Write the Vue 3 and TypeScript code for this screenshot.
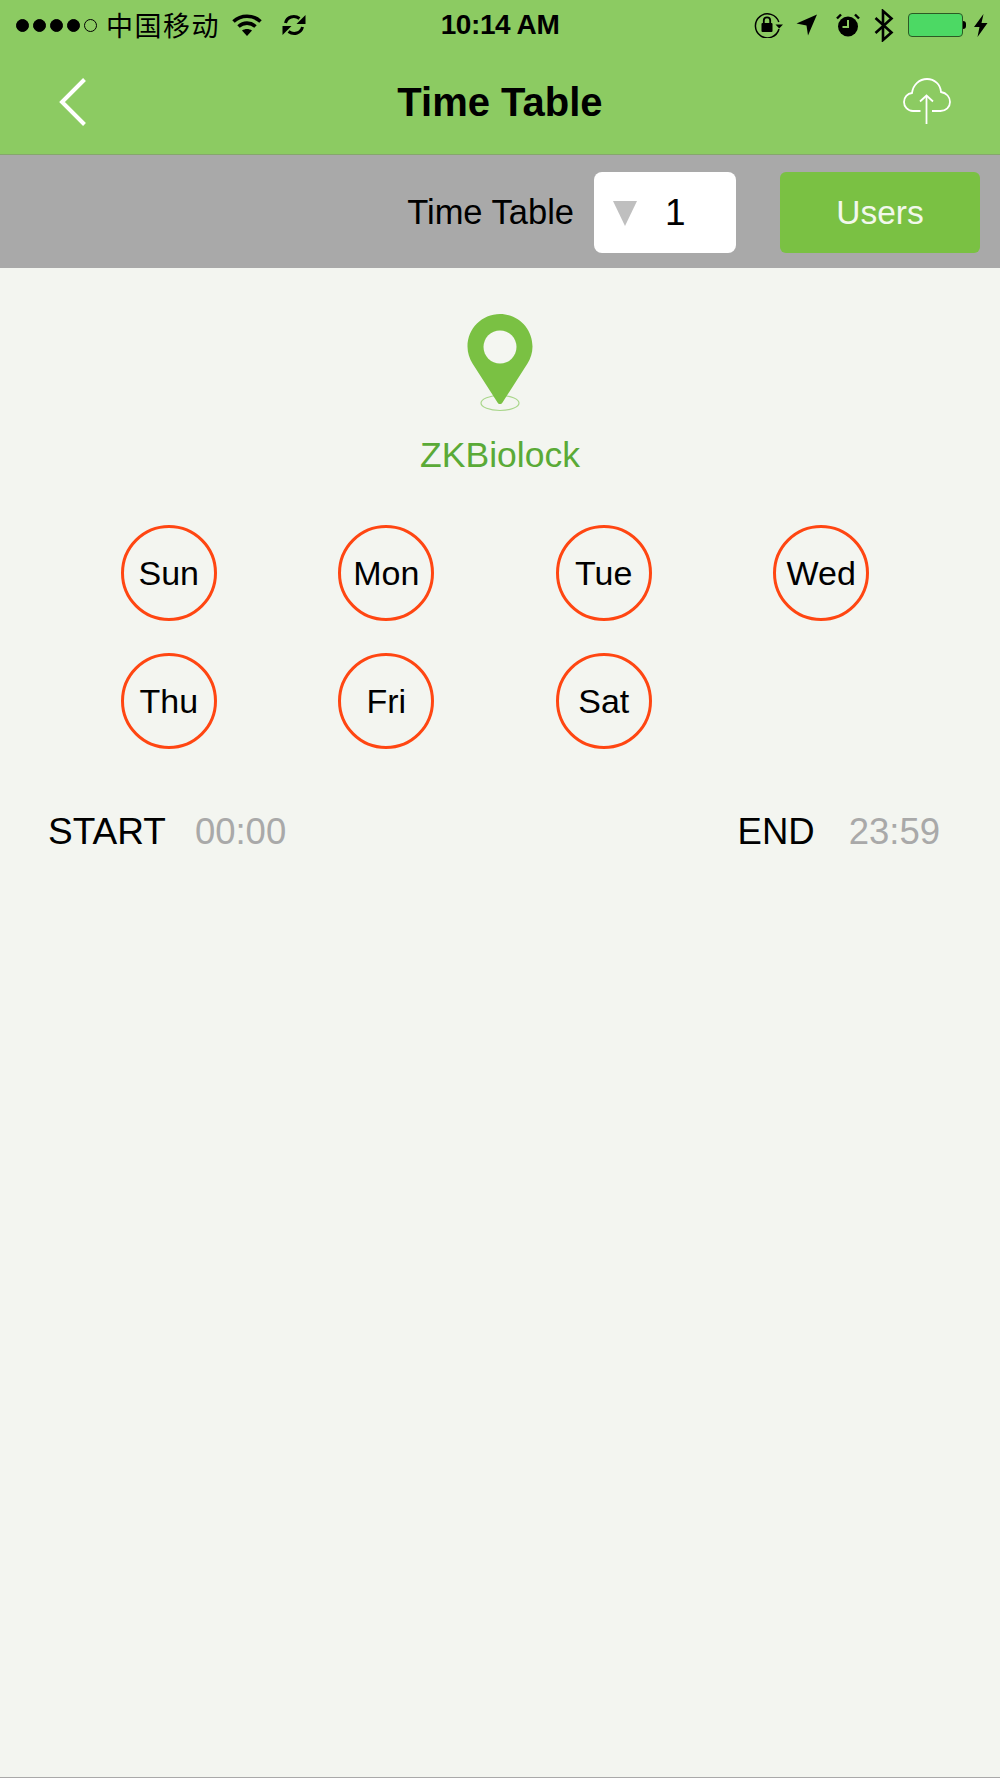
<script setup lang="ts">
const days: string[] = ['Sun', 'Mon', 'Tue', 'Wed', 'Thu', 'Fri', 'Sat']
const signalDots: boolean[] = [true, true, true, true, false]
</script>

<template>
  <div class="page">
    <header class="header">
      <div class="status-bar">
        <div class="status-left">
          <span class="signal">
            <i v-for="(on, i) in signalDots" :key="i" :class="['dot', { on }]"></i>
          </span>
          <span class="carrier">中国移动</span>
          <svg class="wifi" width="30" height="22" viewBox="0 0 30 22">
            <path d="M1.500 7.500C9 .5 21 .5 28.500 7.500" fill="none" stroke="#000" stroke-width="3.600" />
            <path d="M6.500 12.500C11.500 8 18.500 8 23.500 12.500" fill="none" stroke="#000" stroke-width="3.600" />
            <path d="M10 16.500C13 14.500 17 14.500 20 16.500L15 22Z" fill="#000" />
          </svg>
          <svg class="sync" width="24" height="24" viewBox="0 0 24 24">
            <path d="M3.500 10C5 4 12 1.500 17.500 5.500" fill="none" stroke="#000" stroke-width="3" />
            <path d="M20.500 14C19 20 12 22.500 6.500 18.500" fill="none" stroke="#000" stroke-width="3" />
            <path d="M23.500 2V11H14.500Z" fill="#000" />
            <path d="M.5 22V13H9.500Z" fill="#000" />
          </svg>
        </div>
        <div class="status-time">10:14 AM</div>
        <div class="status-right">
          <svg width="30" height="26" viewBox="0 0 30 26">
            <path d="M25 17A12 12 0 1 1 24.800 10" fill="none" stroke="#000" stroke-width="1.500" />
            <path d="M21.500 12.500H29L25.200 16.500Z" fill="#000" />
            <rect x="7.500" y="11" width="11" height="9" rx="1" fill="#000" />
            <path d="M9.800 11V8.500a3.200 3.200 0 0 1 6.400 0V11" fill="none" stroke="#000" stroke-width="1.800" />
          </svg>
          <svg class="location" width="22" height="22" viewBox="0 0 22 22">
            <path d="M21 .5L12 21.500 10.500 11.500 .5 9.500Z" fill="#000" />
          </svg>
          <svg class="alarm" width="24" height="24" viewBox="0 0 24 24">
            <circle cx="12" cy="13.500" r="10" fill="#000" />
            <path d="M12 7V14H6.500" fill="none" stroke="#8ccb62" stroke-width="2" />
            <path d="M1 5.500L5 1.500" stroke="#000" stroke-width="2.400" />
            <path d="M23 5.500L19 1.500" stroke="#000" stroke-width="2.400" />
          </svg>
          <svg class="bluetooth" width="20" height="33" viewBox="0 0 20 33">
            <path d="M1.500 9L17.500 23.500 9 31V2L17.500 9.500 1.500 24" fill="none" stroke="#000" stroke-width="2.600" />
          </svg>
          <span class="battery">
            <span class="battery-body"></span>
            <span class="battery-nub"></span>
          </span>
          <svg class="bolt" width="14" height="23" viewBox="0 0 14 23">
            <path d="M9.500 0L0 13H5.500L3.500 23 13.500 9H7.500Z" fill="#000" />
          </svg>
        </div>
      </div>

      <div class="nav-bar">
        <svg class="back" width="28" height="48" viewBox="0 0 28 48">
          <path d="M25.500 1.500L3 24 25.500 46.500" fill="none" stroke="#fff" stroke-width="4" />
        </svg>
        <h1 class="title">Time Table</h1>
        <svg class="cloud" width="48" height="48" viewBox="0 0 48 48">
          <path
            d="M17.500 33H10C4.500 33 1 28.500 1 24C1 19 4.500 15.500 9 15C10 6.500 16.500 1 24 1C31.500 1 37.500 6.500 38 14C43.500 15 47 19 47 24C47 29 43 33 37.500 33H29"
            fill="none"
            stroke="#fff"
            stroke-width="1.800"
          />
          <path d="M23.500 18V46" fill="none" stroke="#fff" stroke-width="1.800" />
          <path d="M17 23.500L23.500 17.500 30 23.500" fill="none" stroke="#fff" stroke-width="1.800" />
        </svg>
      </div>
    </header>

    <div class="toolbar">
      <span class="toolbar-label">Time Table</span>
      <div class="select">
        <span class="select-arrow"></span>
        <span class="select-value">1</span>
      </div>
      <button class="users-btn">Users</button>
    </div>

    <main class="content">
      <div class="device">
        <svg width="80" height="100" viewBox="0 0 80 100">
          <ellipse cx="40" cy="89" rx="19" ry="7.500" fill="none" stroke="#a9d68b" stroke-width="1.200" />
          <path
            d="M40 0C22 0 7.500 14.500 7.500 32.500C7.500 39 9.500 44.500 12.500 49.500L37.500 88.500C38.700 90.500 41.300 90.500 42.500 88.500L67.500 49.500C70.500 44.500 72.500 39 72.500 32.500C72.500 14.500 58 0 40 0Z"
            fill="#7ac143"
          />
          <circle cx="40" cy="33" r="16.500" fill="#f4f6f1" />
        </svg>
        <div class="device-name">ZKBiolock</div>
      </div>

      <div class="days">
        <div v-for="day in days" :key="day" class="day-cell">
          <div class="day">{{ day }}</div>
        </div>
      </div>

      <div class="times">
        <div class="time-item">
          <span class="time-label">START</span>
          <span class="time-value">00:00</span>
        </div>
        <div class="time-item end">
          <span class="time-label">END</span>
          <span class="time-value">23:59</span>
        </div>
      </div>
    </main>
  </div>
</template>

<style scoped>
.page {
  display: flex;
  flex-direction: column;
  width: 1000px;
  height: 1778px;
  overflow: hidden;
  font-family: "Liberation Sans", Arial, sans-serif;
  color: #000;
  background: #f4f6f1;
}

.header {
  flex: none;
  height: 155px;
  box-sizing: border-box;
  background: #8ccb62;
  border-bottom: 1px solid #85a76c;
}

.status-bar {
  display: grid;
  grid-template-columns: 1fr auto 1fr;
  align-items: center;
  height: 50px;
}

.status-left {
  display: flex;
  align-items: center;
  padding-left: 16px;
}

.signal {
  display: flex;
  gap: 4px;
}

.dot {
  display: block;
  width: 13px;
  height: 13px;
  box-sizing: border-box;
  border: 1px solid #000;
  border-radius: 50%;
}

.dot.on {
  background: #000;
}

.carrier {
  margin-left: 9px;
  font-family: "Noto Sans CJK SC", sans-serif;
  font-size: 27px;
  line-height: 30px;
  letter-spacing: 1.500px;
}

.wifi {
  margin-left: 12px;
}

.sync {
  margin-left: 20px;
}

.status-time {
  font-size: 28px;
  font-weight: 700;
  letter-spacing: -0.4px;
}

.status-right {
  display: flex;
  align-items: center;
  justify-content: flex-end;
  padding-right: 12px;
}

.location {
  margin-left: 12px;
}

.alarm {
  margin-left: 18px;
}

.bluetooth {
  margin-left: 14px;
}

.battery {
  display: flex;
  align-items: center;
  margin-left: 14px;
}

.battery-body {
  display: block;
  width: 55px;
  height: 24px;
  box-sizing: border-box;
  background: #4cd964;
  border: 1px solid #2c5a24;
  border-radius: 4px;
}

.battery-nub {
  display: block;
  width: 3px;
  height: 8px;
  background: #000;
  border-radius: 0 3px 3px 0;
}

.bolt {
  margin-left: 8px;
}

.nav-bar {
  display: grid;
  grid-template-columns: 1fr auto 1fr;
  align-items: center;
  height: 104px;
  padding: 0 49px 0 59px;
}

.title {
  margin: 0 0 0 -10px;
  font-size: 40px;
  font-weight: 700;
}

.cloud {
  justify-self: end;
}

.toolbar {
  display: flex;
  flex: none;
  align-items: center;
  justify-content: flex-end;
  height: 113px;
  box-sizing: border-box;
  padding: 2px 20px 0 0;
  background: #a9a9a9;
}

.toolbar-label {
  margin-right: 20px;
  font-size: 34.500px;
}

.select {
  display: flex;
  align-items: center;
  width: 142px;
  height: 81px;
  box-sizing: border-box;
  padding-left: 19px;
  margin-right: 44px;
  background: #fff;
  border-radius: 8px;
}

.select-arrow {
  width: 0;
  height: 0;
  margin-top: 2px;
  border-top: 25px solid #bfbfbf;
  border-right: 12.500px solid transparent;
  border-left: 12.500px solid transparent;
}

.select-value {
  margin-left: 28px;
  font-size: 37px;
}

.users-btn {
  width: 200px;
  height: 81px;
  padding: 0;
  font-family: inherit;
  font-size: 33.500px;
  color: #f2f8ec;
  background: #7ac143;
  border: none;
  border-radius: 6px;
}

.content {
  flex: 1;
  box-sizing: border-box;
  background: #f3f5f0;
  border-bottom: 1px solid #a9a9a9;
}

.device {
  display: flex;
  flex-direction: column;
  align-items: center;
  padding-top: 46px;
}

.device-name {
  margin-top: 21px;
  font-size: 35.500px;
  color: #5aaa37;
}

.days {
  display: grid;
  grid-template-columns: repeat(4, 217.500px);
  grid-auto-rows: 128px;
  margin-top: 49px;
  padding-left: 60px;
}

.day-cell {
  display: flex;
  justify-content: center;
}

.day {
  display: flex;
  align-items: center;
  justify-content: center;
  width: 96px;
  height: 96px;
  box-sizing: border-box;
  font-size: 34px;
  border: 3px solid #ff4612;
  border-radius: 50%;
}

.times {
  display: flex;
  justify-content: space-between;
  padding: 30px 60px 0 48px;
}

.time-item {
  display: flex;
  gap: 29px;
  align-items: baseline;
}

.time-item.end {
  gap: 34px;
}

.time-label {
  font-size: 37px;
}

.time-item.end .time-label {
  font-size: 36.500px;
}

.time-value {
  font-size: 36.500px;
  color: #a9a9a9;
}
</style>

<style>
html,
body {
  margin: 0;
  background: #f4f6f1;
}
</style>
